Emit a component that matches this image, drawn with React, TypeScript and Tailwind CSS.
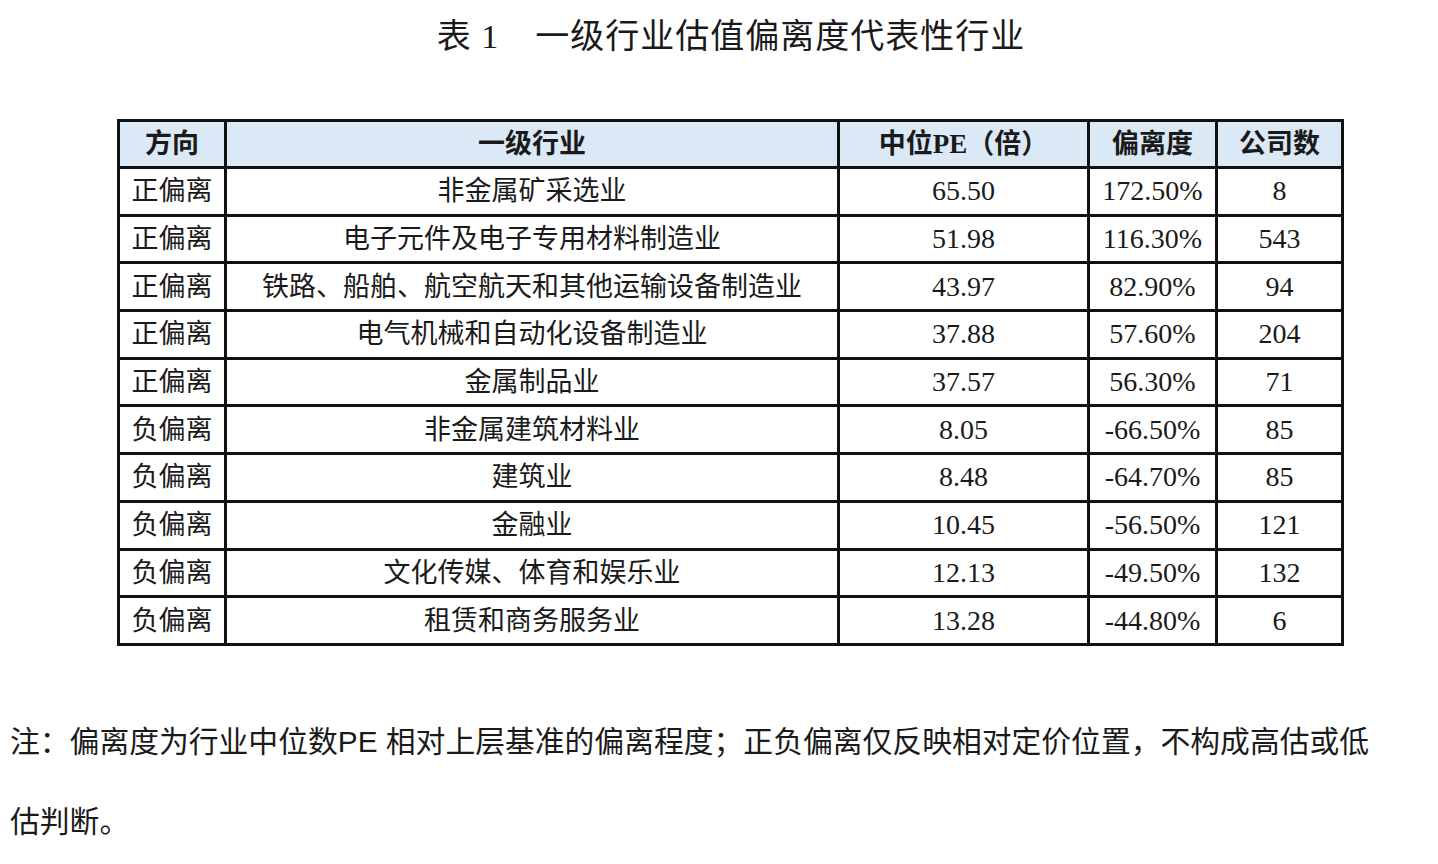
import React from "react";

const rows = [
  ["正偏离", "非金属矿采选业", "65.50", "172.50%", "8"],
  ["正偏离", "电子元件及电子专用材料制造业", "51.98", "116.30%", "543"],
  ["正偏离", "铁路、船舶、航空航天和其他运输设备制造业", "43.97", "82.90%", "94"],
  ["正偏离", "电气机械和自动化设备制造业", "37.88", "57.60%", "204"],
  ["正偏离", "金属制品业", "37.57", "56.30%", "71"],
  ["负偏离", "非金属建筑材料业", "8.05", "-66.50%", "85"],
  ["负偏离", "建筑业", "8.48", "-64.70%", "85"],
  ["负偏离", "金融业", "10.45", "-56.50%", "121"],
  ["负偏离", "文化传媒、体育和娱乐业", "12.13", "-49.50%", "132"],
  ["负偏离", "租赁和商务服务业", "13.28", "-44.80%", "6"],
];

const serif = "font-['Liberation_Serif','Noto_Sans_CJK_SC',serif]";

export default function App() {
  return (
    <div className="w-[1438px] h-[864px] bg-white text-[#1a1a1a] overflow-hidden">
      <div className="flex justify-center pl-[24px] pt-[14px] h-[119px]">
        <div className={`${serif} text-[34px] leading-[46px] tracking-[1px]`}>
          表 1<span className="inline-block w-[36px]" />一级行业估值偏离度代表性行业
        </div>
      </div>
      <table className={`${serif} ml-[117px] w-[1224px] table-fixed border-collapse border-[3px] border-[#111] text-[28px]`}>
        <colgroup>
          <col className="w-[107px]" />
          <col className="w-[613px]" />
          <col className="w-[250px]" />
          <col className="w-[128px]" />
          <col className="w-[126px]" />
        </colgroup>
        <thead>
          <tr className="h-[47px] bg-[#dbe8f5]">
            {["方向", "一级行业", "中位PE（倍）", "偏离度", "公司数"].map((h, i) => (
              <th key={i} className="border-[3px] border-[#111] font-bold text-center p-0 leading-[28px] text-[27px]">
                {h}
              </th>
            ))}
          </tr>
        </thead>
        <tbody>
          {rows.map((r, i) => (
            <tr key={i} className="h-[47.7px]">
              {r.map((c, j) => (
                <td key={j} className={`border-[3px] border-[#111] text-center p-0 leading-[28px] whitespace-nowrap ${j < 2 ? "text-[27px]" : ""}`}>
                  {c}
                </td>
              ))}
            </tr>
          ))}
        </tbody>
      </table>
      <div className="pl-[10px] pt-[84px] font-['Liberation_Sans','Noto_Sans_CJK_SC',sans-serif] text-[29.8px] text-[#1a1a1a]">
        <div className="whitespace-nowrap h-[24px] leading-[24px]">
          注：偏离度为行业中位数PE 相对上层基准的偏离程度；正负偏离仅反映相对定价位置，不构成高估或低
        </div>
        <div className="whitespace-nowrap mt-[56px] h-[24px] leading-[24px]">估判断。</div>
      </div>
    </div>
  );
}
